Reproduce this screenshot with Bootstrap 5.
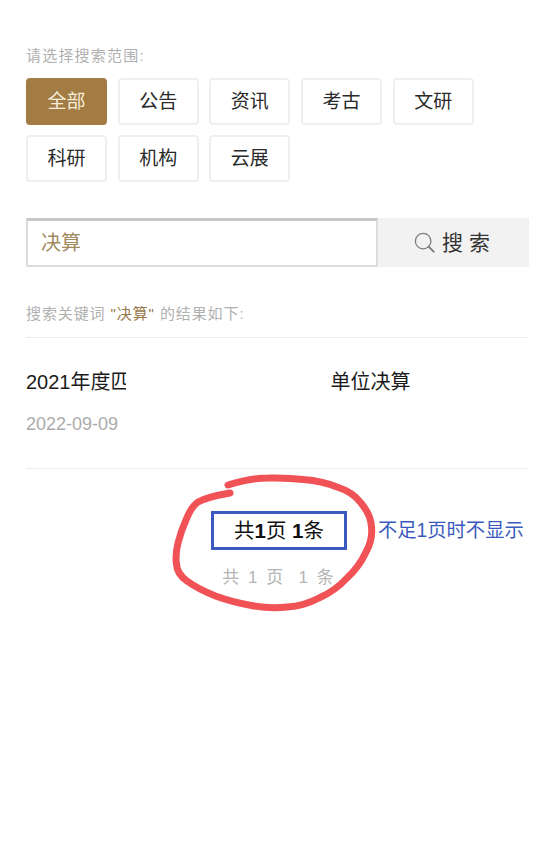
<!DOCTYPE html>
<html lang="zh-CN">
<head>
<meta charset="utf-8">
<meta name="viewport" content="width=device-width, initial-scale=1">
<link href="https://cdn.jsdelivr.net/npm/bootstrap@5.3.0/dist/css/bootstrap.min.css" rel="stylesheet">
<style>
html, body { height: 100%; }
body { background: #fff; color: #222; font-family: "Liberation Sans", "Noto Sans CJK SC", sans-serif; }
.page-wrap { position: relative; width: 556px; height: 844px; overflow: hidden; padding: 47px 27px 0 26px; }
.scope-label { font-size: 15px; line-height: 18px; color: #b0b0b0; letter-spacing: 1.2px; margin-bottom: 13px; }
.scope-list { gap: 10px 10.7px; width: 503px; }
.scope-btn { width: 81px; height: 47px; padding: 0; font-size: 19px; line-height: 43px; color: #2a2a2a; background: #fff; border: 2px solid #efefef; border-radius: 4px; }
.scope-btn.is-on, .scope-btn.is-on:hover { background: #a27c43; border-color: #a27c43; color: #f5ecdc; }
.search-row { margin-top: 36px; height: 49px; }
.search-input.form-control { width: 352px; flex: none; height: 49px; border-radius: 0; border: 2px solid #dcdcdc; border-top: 3px solid #c8c8c8; padding: 0 13px 3px; font-size: 20px; color: #a08a60; box-shadow: none; }
.search-go.btn { flex: 1; height: 49px; border: 0; border-radius: 0; background: #f2f2f2; color: #333; font-size: 21px; line-height: 47px; padding: 0 3px 0 0; }
.search-go svg { margin-right: 7px; vertical-align: -3px; }
.result-note { margin-top: 38px; font-size: 15px; line-height: 18px; color: #b0b0b0; letter-spacing: .9px; padding-bottom: 14px; border-bottom: 1px solid #ebebeb; }
.result-note b { color: #97794a; font-weight: 400; }
.result-item { position: relative; height: 131px; padding-top: 31px; border-bottom: 1px solid #ebebeb; }
.result-title { font-size: 20px; line-height: 26px; font-weight: 400; color: #1b1b1b; margin: 0; white-space: nowrap; }
.result-date { font-size: 18px; line-height: 22px; color: #ababab; margin-top: 18px; }
.redact-patch { position: absolute; background: #fff; }
.patch-a { left: 100px; top: 30px; width: 205px; height: 29px; }
.pager-zone { position: relative; height: 160px; }
.pager-box { position: absolute; left: 185px; top: 42px; width: 136px; height: 39px; border: 3px solid #3a5bbd; font-size: 20.5px; line-height: 33px; font-weight: 400; text-align: center; color: #111; white-space: nowrap; }
.pager-plain { position: absolute; left: 185px; top: 97px; width: 136px; font-size: 17px; line-height: 24px; letter-spacing: 2px; text-align: center; color: #b4b4b4; white-space: nowrap; }
.pager-note { position: absolute; left: 352px; top: 49px; font-size: 19.3px; line-height: 26px; color: #3a5bbd; white-space: nowrap; }
.ring-mark { position: absolute; left: 0; top: 0; }
</style>
</head>
<body>
<div class="page-wrap">
  <div class="scope-label">请选择搜索范围:</div>
  <div class="scope-list d-flex flex-wrap">
    <a class="btn scope-btn is-on" href="#">全部</a>
    <a class="btn scope-btn" href="#">公告</a>
    <a class="btn scope-btn" href="#">资讯</a>
    <a class="btn scope-btn" href="#">考古</a>
    <a class="btn scope-btn" href="#">文研</a>
    <a class="btn scope-btn" href="#">科研</a>
    <a class="btn scope-btn" href="#">机构</a>
    <a class="btn scope-btn" href="#">云展</a>
  </div>
  <form class="search-row d-flex" onsubmit="return false">
    <input class="form-control search-input" type="text" value="决算" aria-label="搜索">
    <button class="btn search-go" type="button"><svg width="21" height="21" viewBox="0 0 23 23" fill="none" aria-hidden="true"><circle cx="10" cy="10" r="8.5" stroke="#7d7d7d" stroke-width="1.4"/><path d="M16 16l5.5 5.5" stroke="#7d7d7d" stroke-width="2.2" stroke-linecap="round"/></svg>搜 索</button>
  </form>
  <div class="result-note">搜索关键词 <b>"决算"</b> 的结果如下:</div>
  <div class="result-item">
    <h2 class="result-title">2021年度匹配考古博物馆部门预算单位决算</h2>
    <div class="result-date">2022-09-09</div>
    <div class="redact-patch patch-a"></div>
  </div>
  <div class="pager-zone">
    <div class="pager-box">共<b>1</b>页 <b>1</b>条</div>
    <div class="pager-plain">共 1 页&nbsp; 1 条</div>
    <div class="pager-note">不足1页时不显示</div>
  </div>
  <svg class="ring-mark" width="556" height="844" viewBox="0 0 556 844" fill="none" aria-hidden="true">
    <path d="M228,485 Q250,478 268.5,478 Q287,477.5 303.5,479.5 Q322,481 337,487 Q353,492 361,503 Q371,515 371.5,527 Q373,540 365.5,553 Q359,567 347,578 Q335,591 319,598 Q304,606 287,607 Q270,609 251.5,605.5 Q232,602 215.5,596 Q198,589 187,581 Q177,574 176.5,564 Q175,555 178,543 Q181,531 186,520 Q191,507 198,502 Q207,497 230,493" stroke="#f05256" stroke-width="7" stroke-linecap="round" stroke-linejoin="round"/>
  </svg>
</div>
<script src="https://cdn.jsdelivr.net/npm/bootstrap@5.3.0/dist/js/bootstrap.bundle.min.js"></script>
</body>
</html>
